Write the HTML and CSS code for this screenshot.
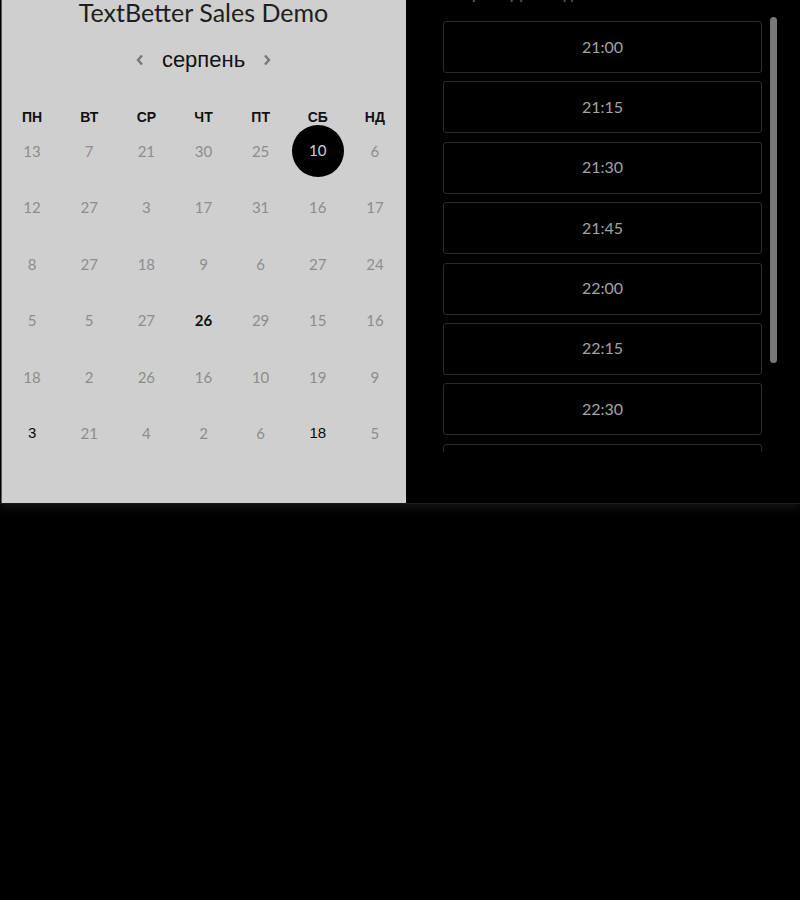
FILE: index.html
```html
<!DOCTYPE html>
<html lang="uk">
<head>
<meta charset="utf-8">
<title>TextBetter Sales Demo</title>
<link rel="stylesheet" href="styles.css">
</head>
<body>
<div class="card">
  <section class="cal">
    <h1 class="title">TextBetter Sales Demo</h1>
    <div class="month-nav">
      <svg class="chev" width="8" height="12" viewBox="0 0 8 12"><polyline points="6,1.5 2,6 6,10.5" fill="none" stroke="#777" stroke-width="2.4"/></svg>
      <span class="month">серпень</span>
      <svg class="chev" width="8" height="12" viewBox="0 0 8 12"><polyline points="2,1.5 6,6 2,10.5" fill="none" stroke="#777" stroke-width="2.4"/></svg>
    </div>
    <div class="weekdays">
      <span>ПН</span><span>ВТ</span><span>СР</span><span>ЧТ</span><span>ПТ</span><span>СБ</span><span>НД</span>
    </div>
    <div class="days">
      <span class="d">13</span><span class="d">7</span><span class="d">21</span><span class="d">30</span><span class="d">25</span><span class="d sel"><b>10</b></span><span class="d">6</span>
      <span class="d">12</span><span class="d">27</span><span class="d">3</span><span class="d">17</span><span class="d">31</span><span class="d">16</span><span class="d">17</span>
      <span class="d">8</span><span class="d">27</span><span class="d">18</span><span class="d">9</span><span class="d">6</span><span class="d">27</span><span class="d">24</span>
      <span class="d">5</span><span class="d">5</span><span class="d">27</span><span class="d today">26</span><span class="d">29</span><span class="d">15</span><span class="d">16</span>
      <span class="d">18</span><span class="d">2</span><span class="d">26</span><span class="d">16</span><span class="d">10</span><span class="d">19</span><span class="d">9</span>
      <span class="d avail">3</span><span class="d">21</span><span class="d">4</span><span class="d">2</span><span class="d">6</span><span class="d avail">18</span><span class="d">5</span>
    </div>
  </section>
  <section class="times">
    <p class="times-head">Оберіть зручний для вас вільний час</p>
    <div class="times-body">
      <div class="slots">
        <button class="slot">21:00</button>
        <button class="slot">21:15</button>
        <button class="slot">21:30</button>
        <button class="slot">21:45</button>
        <button class="slot">22:00</button>
        <button class="slot">22:15</button>
        <button class="slot">22:30</button>
        <button class="slot">22:45</button>
      </div>
      <div class="scrollbar"><div class="thumb"></div></div>
    </div>
  </section>
</div>
</body>
</html>
```
FILE: styles.css
```css
html, body {
  margin: 0;
  padding: 0;
  background: #000;
}
body {
  width: 800px;
  height: 900px;
  overflow: hidden;
  font-family: Lato, "Open Sans", sans-serif;
}
.card {
  display: flex;
  height: 504px;
  background: #000;
  box-shadow: 0 3px 10px rgba(255, 255, 255, 0.09);
  border-bottom: 1px solid #1a1a1a;
  box-sizing: border-box;
}
.cal {
  width: 405px;
  margin-left: 1px;
  border-left: 1px solid #5a5a5a;
  background: #cfcfcf;
  padding: 0 2.5px 0 1.5px;
  box-sizing: border-box;
}
.title {
  margin: -2px 0 0;
  height: 28px;
  line-height: 28px;
  font-size: 25px;
  font-weight: 400;
  color: #1e1e1e;
  text-align: center;
}
.month-nav {
  margin-top: 19px;
  height: 30px;
  display: flex;
  align-items: center;
  justify-content: center;
  gap: 18px;
}
.month {
  font-family: "Liberation Sans", Arial, sans-serif;
  font-size: 22px;
  color: #111;
  line-height: 30px;
}
.chev { display: block; }
.weekdays {
  margin-top: 34px;
  height: 16px;
  display: grid;
  grid-template-columns: repeat(7, 1fr);
  text-align: center;
  font-family: "Liberation Sans", Arial, sans-serif;
  font-weight: 700;
  font-size: 14px;
  line-height: 16px;
  color: #111;
}
.days {
  display: grid;
  grid-template-columns: repeat(7, 1fr);
  grid-auto-rows: 52px;
  row-gap: 4.4px;
}
.d {
  display: flex;
  align-items: center;
  justify-content: center;
  font-size: 15px;
  color: #8d8d8d;
}
.d.today {
  color: #111;
  font-weight: 700;
}
.d.avail {
  color: #0c0c0c;
  font-family: "Liberation Sans", Arial, sans-serif;
}
.d.sel b {
  width: 52px;
  height: 52px;
  border-radius: 50%;
  background: #000;
  color: #cfcfcf;
  font-weight: 400;
  display: flex;
  align-items: center;
  justify-content: center;
  padding-bottom: 2px;
  box-sizing: border-box;
}
.times {
  flex: 1;
  padding-left: 37px;
  overflow: hidden;
}
.times-head {
  margin: -15px 0 0;
  height: 17px;
  line-height: 17px;
  font-size: 15px;
  font-weight: 700;
  color: #555;
  white-space: nowrap;
}
.times-body {
  display: flex;
  gap: 8px;
  margin-top: 11px;
}
.slots {
  width: 319px;
  height: 439px;
  overflow: hidden;
  padding-top: 8px;
  box-sizing: border-box;
  display: flex;
  flex-direction: column;
  gap: 8.4px;
}
.slot {
  flex: none;
  height: 52px;
  width: 100%;
  background: #000;
  border: 1px solid #2c2c2c;
  border-radius: 3px;
  color: #a3a3a3;
  font-family: Lato, "Open Sans", sans-serif;
  font-weight: 400;
  font-size: 16px;
  padding: 0 0 2px;
}
.scrollbar {
  width: 7px;
  padding-top: 4px;
}
.thumb {
  width: 7px;
  height: 346px;
  border-radius: 4px;
  background: #787878;
}
```
